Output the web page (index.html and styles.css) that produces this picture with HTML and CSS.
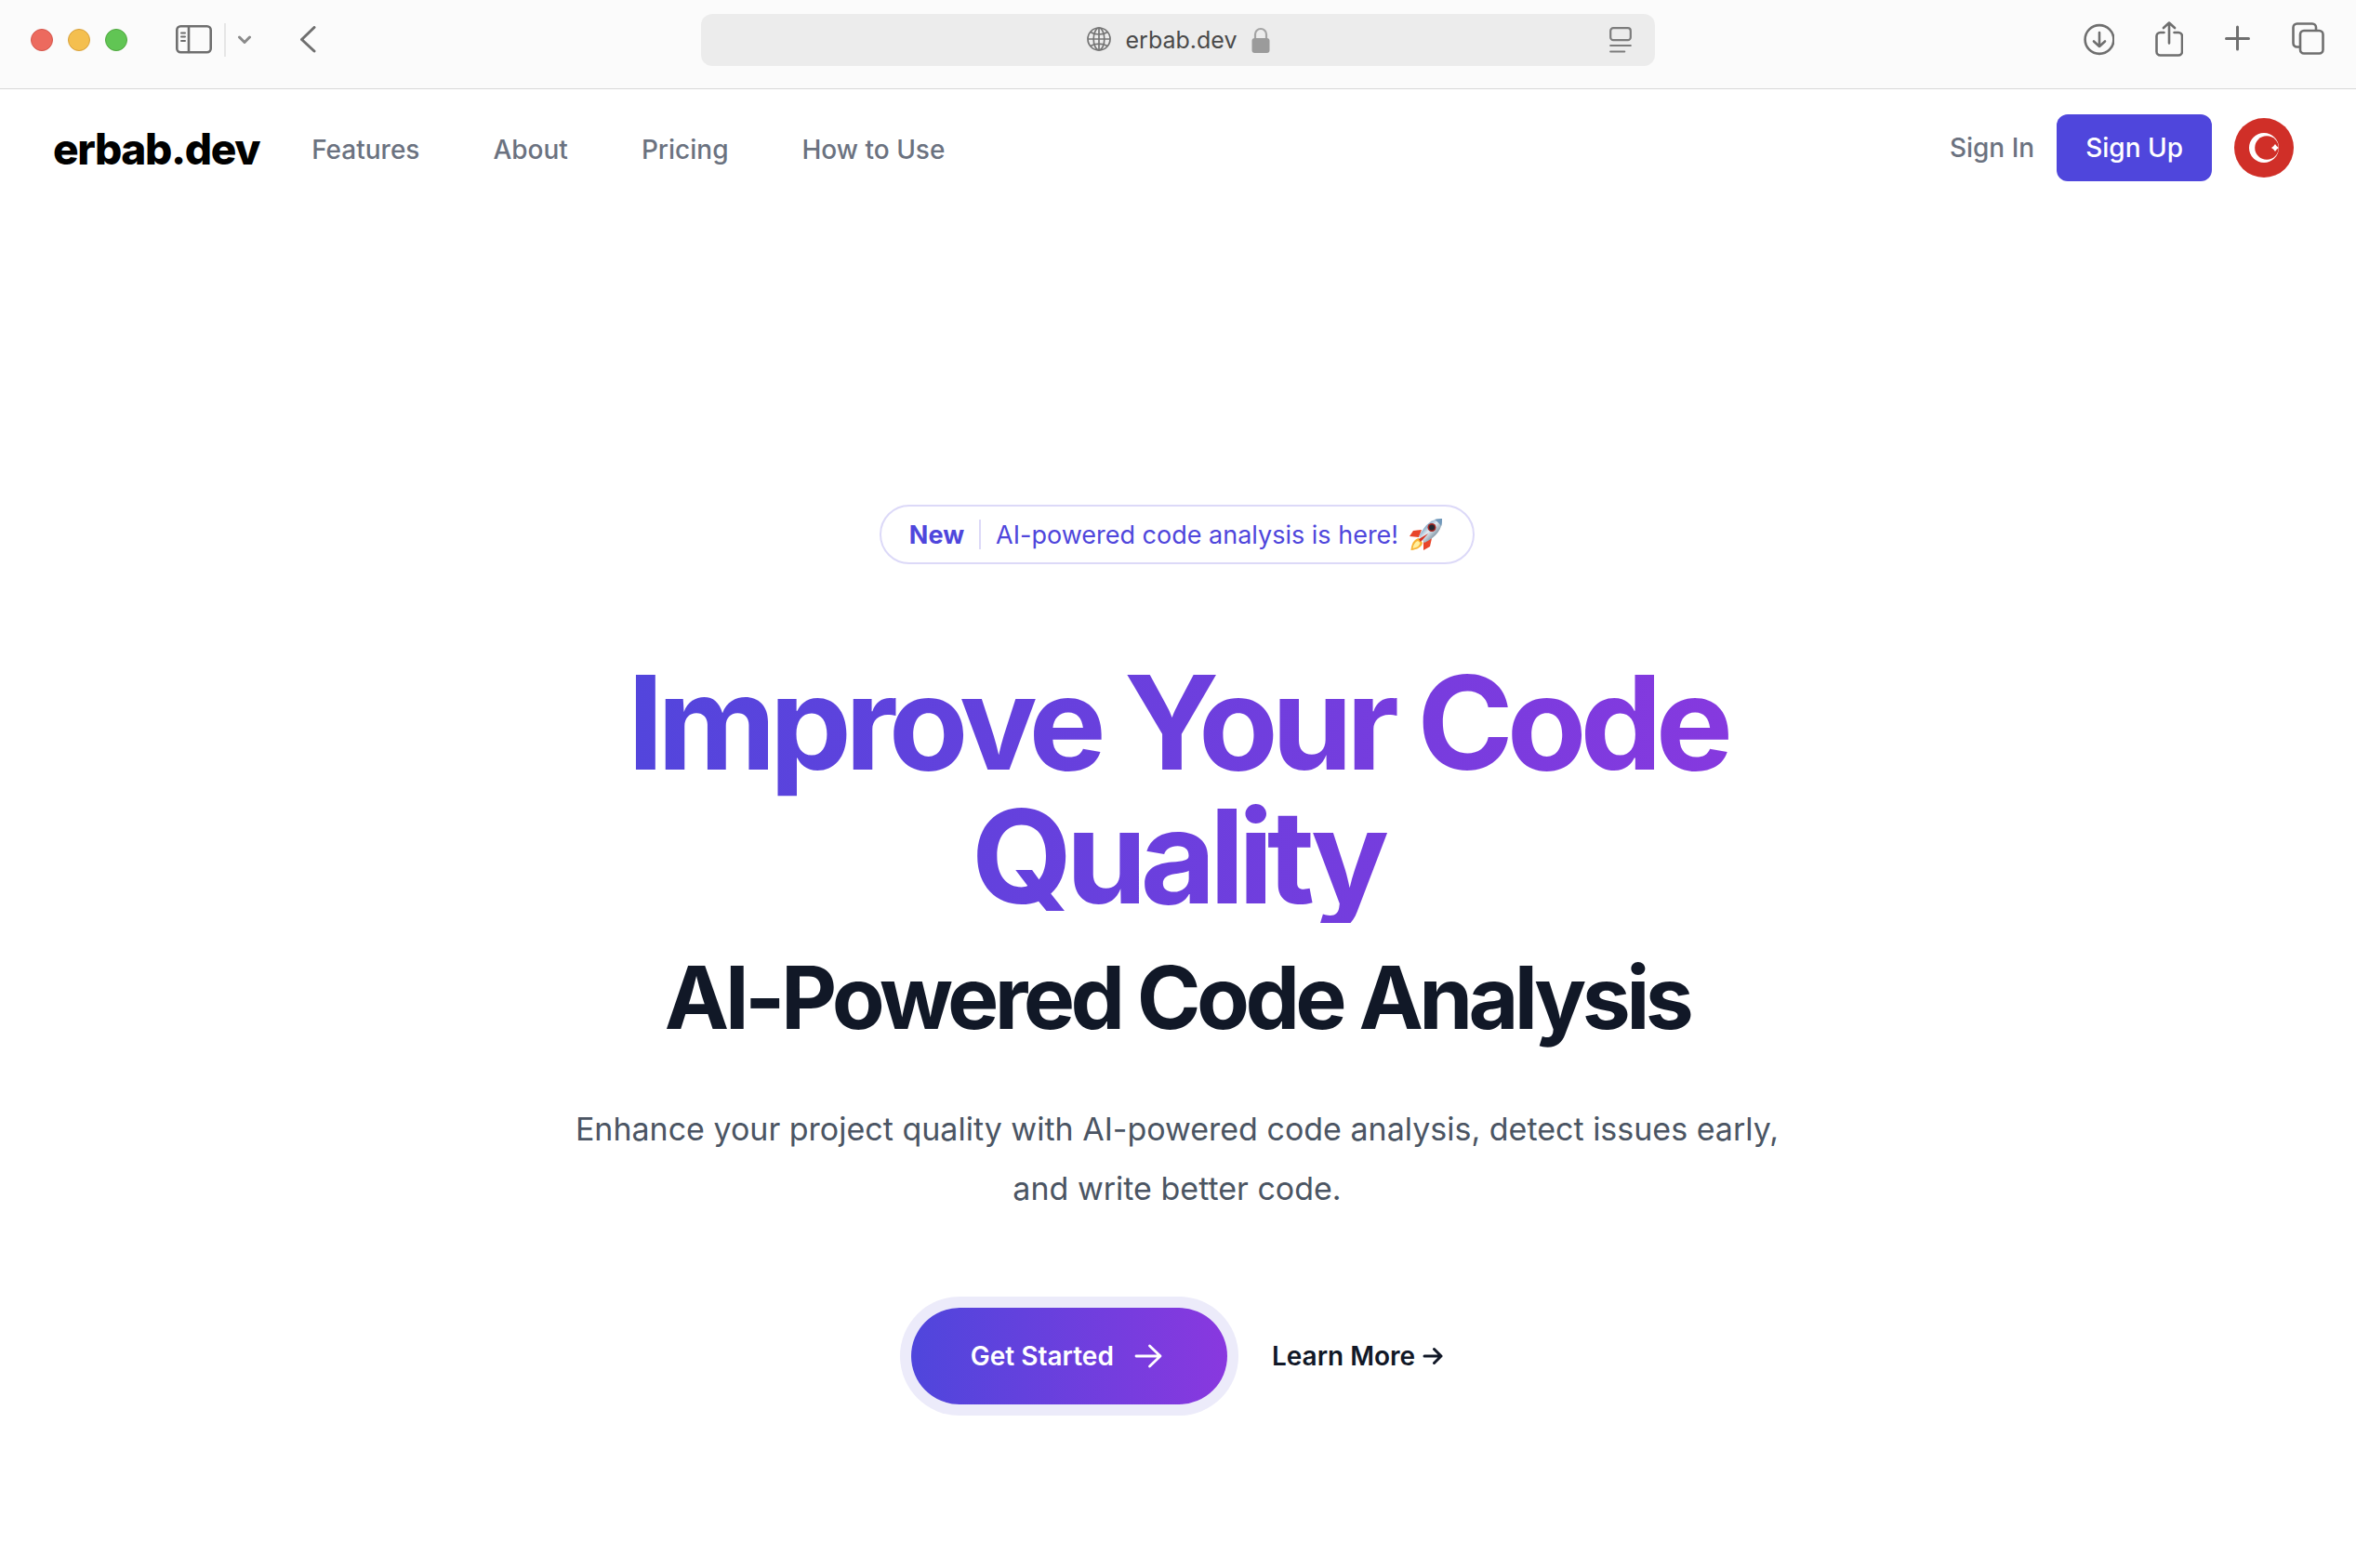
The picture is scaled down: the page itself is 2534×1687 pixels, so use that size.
FILE: index.html
```html
<!DOCTYPE html>
<html lang="en">
<head>
<meta charset="utf-8">
<meta name="viewport" content="width=device-width, initial-scale=1">
<title>erbab.dev</title>
<link rel="stylesheet" href="styles.css">
</head>
<body>
<div class="toolbar">
  <div class="toolbar-side">
    <div class="lights"><span class="light red"></span><span class="light yellow"></span><span class="light green"></span></div>
    <div class="sidebar-group">
      <button class="tool" aria-label="Sidebar"><svg width="40" height="32" viewBox="0 0 40 32" fill="none" stroke="#6f6f6f" stroke-width="2.6" stroke-linecap="round"><rect x="1.3" y="1.3" width="36.4" height="28" rx="4"/><path d="M14 2v27"/><path d="M6 8.500h4M6 12.500h4M6 17h4" stroke-width="2"/></svg></button>
      <span class="tool-divider"></span>
      <button class="tool" aria-label="Tab groups"><svg width="16" height="10" viewBox="0 0 16 10" fill="none" stroke="#8a8a8a" stroke-width="3" stroke-linecap="round" stroke-linejoin="round"><path d="M2.500 2L8 7.500 13.500 2"/></svg></button>
    </div>
    <button class="tool" aria-label="Back"><svg width="18" height="30" viewBox="2 1 18 30" fill="none" stroke="#6f6f6f" stroke-width="3" stroke-linecap="round" stroke-linejoin="round"><path d="M17 2.500L3.500 15.500 17 28"/></svg></button>
  </div>
  <div class="address">
    <span class="address-text">
      <svg width="26" height="28" viewBox="0 0 26 28" fill="none" stroke="#757575" stroke-width="1.700"><circle cx="13" cy="13" r="12"/><ellipse cx="13" cy="13" rx="5.800" ry="12"/><path d="M13 1v24M1 13h24M3.800 5.500c5 3.300 13.400 3.300 18.400 0M3.800 20.500c5-3.300 13.400-3.300 18.400 0"/></svg>
      <span>erbab.dev</span>
      <svg width="20" height="28" viewBox="0 0 20 28"><path d="M4 13V8a6 6 0 0 1 12 0v5" fill="none" stroke="#a4a4a4" stroke-width="2.200"/><rect x="0.500" y="12" width="19" height="16" rx="3" fill="#9b9b9b"/></svg>
    </span>
    <button class="tool" aria-label="Page menu"><svg width="24" height="28" viewBox="0 0 24 28" fill="none" stroke="#7c7c7c" stroke-width="2.200" stroke-linecap="round"><rect x="1.200" y="1.200" width="21.600" height="13" rx="3"/><path d="M1.200 20h21.600M1.200 26.500h15"/></svg></button>
  </div>
  <div class="toolbar-side toolbar-end">
    <button class="tool" aria-label="Downloads"><svg width="34" height="40" viewBox="-1 0 34 40" fill="none" stroke="#6f6f6f" stroke-width="2.600" stroke-linecap="round" stroke-linejoin="round"><circle cx="17" cy="19.500" r="15.400"/><path d="M17 12v15M11 21.500l6 5.500 6-5.500"/></svg></button>
    <button class="tool" aria-label="Share"><svg width="30" height="40" viewBox="0 1 30 40" fill="none" stroke="#6f6f6f" stroke-width="2.600" stroke-linecap="round" stroke-linejoin="round"><path d="M9.500 13H5.500a4 4 0 0 0-4 4v16.500a4 4 0 0 0 4 4h19.500a4 4 0 0 0 4-4V17a4 4 0 0 0-4-4h-4.500M15 24.500V2.500M9 8L15 2.500 21 8"/></svg></button>
    <button class="tool" aria-label="New tab"><svg width="28" height="40" viewBox="0 1 28 40" fill="none" stroke="#6f6f6f" stroke-width="3" stroke-linecap="round"><path d="M14.500 7v24M2.500 19.500h24"/></svg></button>
    <button class="tool" aria-label="Tab overview"><svg width="36" height="40" viewBox="0 2 36 40" fill="none" stroke="#6f6f6f" stroke-width="2.600" stroke-linejoin="round"><rect x="10" y="12" width="24.500" height="24.500" rx="4"/><path d="M10 29.500H6.500a4 4 0 0 1-4-4V8.500a4 4 0 0 1 4-4H23a4 4 0 0 1 4 4V12"/></svg></button>
  </div>
</div>

<header class="site-header">
  <a class="brand" href="#">erbab.dev</a>
  <nav class="nav">
    <a href="#">Features</a><a href="#">About</a><a href="#">Pricing</a><a href="#">How to Use</a>
  </nav>
  <div class="account">
    <a class="sign-in" href="#">Sign In</a>
    <button class="sign-up">Sign Up</button>
    <button class="flag" aria-label="Türkçe"><svg width="64" height="64" viewBox="0 0 64 64"><circle cx="32" cy="32" r="32" fill="#d02f28"/><circle cx="32" cy="32" r="16" fill="#fff"/><circle cx="35" cy="32" r="12.800" fill="#d02f28"/><path d="M44 28l1.700 2.300L48 32l-2.300 1.700L44 36l-1.700-2.300L40 32l2.300-1.700z" fill="#fff"/></svg></button>
  </div>
</header>

<main class="hero">
  <a class="pill" href="#">
    <strong>New</strong><span class="pill-divider"></span><span>AI-powered code analysis is here!</span>
    <svg width="36" height="36" viewBox="0 0 36 36"><defs><linearGradient id="hull" x1="0.200" y1="0.200" x2="0.800" y2="0.800"><stop offset="0" stop-color="#4f82ad"/><stop offset=".45" stop-color="#e4ecf2"/><stop offset="1" stop-color="#5f788b"/></linearGradient></defs><path d="M13 13L4 14 0 20l10 1zM24 22l-2 9-7 4 0-9z" fill="#e8452a"/><path d="M10 22c-5 1-8 6-8.500 13C8 34 13 32 14 27z" fill="#f8b334"/><path d="M9 25c-3 1-5 4-5.500 8 4-.5 7-2 8-6z" fill="#fff0a0"/><path d="M35 1c-9-1-18 5-25 19l6 7C29 21 36 11 35 1z" fill="url(#hull)"/><path d="M27 2c3-1 6-1 8-1 0 3 0 5-1 8-2-3-4-5-7-7z" fill="#7199bb"/><circle cx="24" cy="10.500" r="4.500" fill="#a52520"/><circle cx="24" cy="10.500" r="3" fill="#222832"/><path d="M20 17l-8 9-2-3z" fill="#d7301f"/></svg>
  </a>
  <h1 class="title"><span class="title-main">Improve Your Code Quality</span><span class="title-sub">AI-Powered Code Analysis</span></h1>
  <p class="lead">Enhance your project quality with AI-powered code analysis, detect issues early, and write better code.</p>
  <div class="actions">
    <button class="cta">Get Started <svg width="30" height="28" viewBox="0 0 30 28" fill="none" stroke="#fff" stroke-width="2.800" stroke-linecap="round" stroke-linejoin="round"><path d="M2 14h26M16.500 3L28 14 16.500 25"/></svg></button>
    <a class="more" href="#">Learn More <svg width="22" height="20" viewBox="0 0 22 20" fill="none" stroke="currentColor" stroke-width="3" stroke-linecap="round" stroke-linejoin="round"><path d="M2 10h18M12.500 2.500L20 10l-7.500 7.500"/></svg></a>
  </div>
</main>
</body>
</html>
```
FILE: styles.css
```css
* { box-sizing: border-box; }
body { margin: 0; background: #fff; font-family: Inter, "Liberation Sans", sans-serif; color: #111827; }
button { border: 0; padding: 0; background: none; font: inherit; cursor: pointer; }
a { color: inherit; text-decoration: none; }
svg { display: block; flex: none; }

.toolbar { display: flex; height: 96px; padding: 15px 34px 0 33px; align-items: flex-start; background: #fbfbfb; border-bottom: 1px solid #d8d8d8; }
.toolbar-side { flex: 1; display: flex; height: 56px; align-items: center; gap: 52px; }
.toolbar-end { justify-content: flex-end; gap: 44px; }
.lights { display: flex; gap: 16px; }
.light { width: 24px; height: 24px; border-radius: 50%; }
.red { background: #ec6a5e; border: 1px solid #d5564c; }
.yellow { background: #f4bf4f; border: 1px solid #d8a13c; }
.green { background: #61c554; border: 1px solid #4fa73f; }
.sidebar-group { display: flex; align-items: center; gap: 12px; }
.tool-divider { width: 2px; height: 36px; background: #e6e6e6; }
.address { width: 1026px; height: 56px; display: flex; align-items: center; padding: 0 25px 0 51px; border-radius: 12px; background: #ececec; }
.address-text { flex: 1; display: flex; align-items: center; justify-content: center; gap: 16px; font-size: 25px; color: #4a4a4a; }

.site-header { display: flex; align-items: flex-start; padding: 27px 67px 0 57px; }
.brand { font-size: 46px; line-height: 74px; font-weight: 800; letter-spacing: -0.03em; color: #000; }
.nav { display: flex; gap: 79px; margin-left: 56px; font-size: 28px; line-height: 76px; font-weight: 500; color: #6b7280; }
.account { display: flex; align-items: center; gap: 24px; margin-left: auto; font-size: 28px; font-weight: 500; color: #6b7280; }
.sign-up { height: 72px; padding: 0 31px; border-radius: 12px; background: #4f46dc; color: #fff; }

.hero { display: flex; flex-direction: column; align-items: center; padding: 344px 34px 160px 32px; text-align: center; }
.pill { display: flex; align-items: center; height: 64px; padding: 0 32px 0 30px; border: 2px solid #dcd9f8; border-radius: 32px; font-size: 27px; color: #4f46dc; }
.pill strong { font-weight: 700; }
.pill-divider { width: 2px; height: 32px; margin: 0 16px; background: #dcd9f8; }
.pill svg { margin-left: 12px; }
.title { display: flex; flex-direction: column; width: 100%; max-width: 1344px; margin: 96px 0 0; font-weight: 700; }
.title-main { padding: 2px 64px 0; font-size: 140px; line-height: 144px; letter-spacing: -0.05em; background: linear-gradient(to right, #4f46dc, #8938df); background-clip: text; -webkit-background-clip: text; color: transparent; }
.title-sub { margin-top: 32px; font-size: 93px; line-height: 96px; letter-spacing: -0.05em; }
.lead { max-width: 1344px; margin: 62px 0 0; font-size: 34px; line-height: 64px; color: #4b5563; }
.actions { display: flex; align-items: center; gap: 48px; margin-top: 96px; font-size: 28px; font-weight: 600; }
.cta { display: flex; align-items: center; gap: 22px; height: 104px; padding: 0 70px 0 64px; border-radius: 52px; background: linear-gradient(to right, #4f46dc, #8938df); box-shadow: 0 0 0 12px #ecebfa; color: #fff; }
.more { display: flex; align-items: center; gap: 8px; }
```
